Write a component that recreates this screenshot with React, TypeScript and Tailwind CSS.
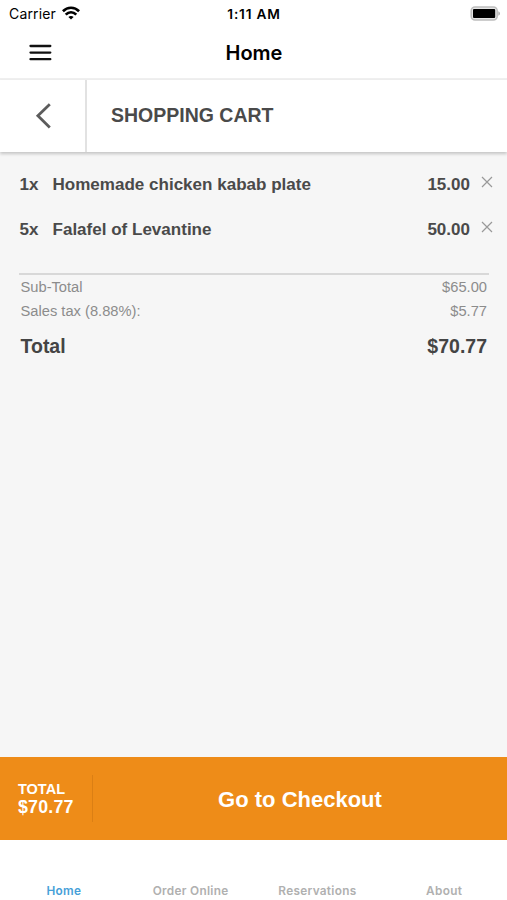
import React from 'react';

const items = [
  { qty: 1, name: 'Homemade chicken kabab plate', price: '15.00' },
  { qty: 5, name: 'Falafel of Levantine', price: '50.00' },
];

const tabs = ['Home', 'Order Online', 'Reservations', 'About'];

const StatusBar = () => (
  <div className="grid grid-cols-3 items-center h-7 pl-[9px] pr-[7px] text-black">
    <div className="flex items-center gap-1.5">
      <span className="text-[14px] leading-7 tracking-[0.15px]">Carrier</span>
      <svg className="mb-[2px]" width="18" height="14" viewBox="0 0 18 14" fill="none" stroke="currentColor" strokeWidth="2.7">
        <path d="M0.9 5.2 C5.5 0.6 12.5 0.6 17.1 5.2" />
        <path d="M3.7 8.6 C6.8 5.6 11.2 5.6 14.3 8.6" />
        <path d="M9 13.4 L6.4 10.9 C7.9 9.6 10.1 9.6 11.6 10.9 Z" fill="currentColor" stroke="none" />
      </svg>
    </div>
    <span className="text-center text-[13.7px] leading-7 font-semibold tracking-[0.8px] pr-px">1:11 AM</span>
    <svg className="justify-self-end mb-px" width="30" height="15" viewBox="0 0 30 15">
      <rect x="1.2" y="1" width="26" height="13" rx="3.8" fill="#e6e6e6" stroke="#bdbdbd" strokeWidth="1.5" />
      <rect x="3" y="3" width="22.2" height="9" rx="1" fill="#000" />
      <path d="M28.4 5.2 C30.4 6.2 30.4 8.8 28.4 9.8 Z" fill="#a6a6a6" />
    </svg>
  </div>
);

const NavBar = () => (
  <div className="grid grid-cols-3 items-center h-[52px] border-b-2 border-[#efefef] pl-[29px] pr-[29px]">
    <svg className="mb-[2px]" width="23" height="17" viewBox="0 0 23 17" stroke="#111" strokeWidth="2.3" strokeLinecap="round">
      <path d="M1.5 2 H21.3 M1.5 8.6 H21.3 M1.5 15.2 H21.3" />
    </svg>
    <h1 className="pl-px text-center text-[20px] leading-6 font-semibold text-black">Home</h1>
  </div>
);

const CartHeader = () => (
  <div className="relative flex h-[72px] bg-white shadow-[0_2px_3px_rgba(0,0,0,0.2)]">
    <button className="flex items-center justify-center w-[87px] pl-px border-r-2 border-[#e2e2e2]">
      <svg width="16" height="26" viewBox="0 0 16 26" fill="none" stroke="#5c5c5c" strokeWidth="2.8">
        <path d="M14.8 1.2 L2.9 12.8 L14.8 24.4" />
      </svg>
    </button>
    <h2 className="pl-6 text-[19.5px] leading-[71px] font-bold text-[#4a4a4a]">SHOPPING CART</h2>
  </div>
);

export default function App() {
  return (
    <div className="flex flex-col w-[507px] h-[900px] overflow-hidden bg-white font-['Inter',sans-serif]">
      <StatusBar />
      <NavBar />

      <div className="flex flex-col flex-1 bg-[#f6f6f6] font-['Liberation_Sans',Arial,sans-serif]">
        <CartHeader />

        {/* Line items */}
        <div className="pt-[10px] pl-[19.5px] pr-[14px] text-[17.05px] font-bold text-[#4a4a4a]">
          {items.map((item) => (
            <div key={item.name} className="flex h-[45px] leading-[45px]">
              <span className="w-[33px]">{item.qty}x</span>
              <span className="flex-1">{item.name}</span>
              <span>{item.price}</span>
              <svg className="ml-[11px] mt-[14px]" width="12" height="12" viewBox="0 0 12 12" stroke="#999" strokeWidth="1.2">
                <path d="M1 1 L11 11 M11 1 L1 11" />
              </svg>
            </div>
          ))}
        </div>

        {/* Summary */}
        <div className="ml-[19px] mr-[18px] mt-[21px] border-t-2 border-[#d8d8d8] pl-[1.5px] pr-[2px] text-[14.7px] text-[#8c8c8c]">
          <div className="flex justify-between leading-6">
            <span>Sub-Total</span>
            <span>$65.00</span>
          </div>
          <div className="flex justify-between leading-6">
            <span>Sales tax (8.88%):</span>
            <span>$5.77</span>
          </div>
          <div className="flex justify-between mt-2 text-[19.5px] leading-[30px] font-bold text-[#444]">
            <span>Total</span>
            <span>$70.77</span>
          </div>
        </div>
      </div>

      {/* Checkout bar */}
      <div className="flex items-center h-[83px] bg-[#ee8c18] font-['Liberation_Sans',Arial,sans-serif] font-bold text-white">
        <div className="flex flex-col justify-center w-[93px] h-[47px] pl-[18px] border-r border-[#db7f14]">
          <span className="text-[14.5px] leading-[18px]">TOTAL</span>
          <span className="text-[17.8px] leading-[19px] tracking-[0.2px]">$70.77</span>
        </div>
        <button className="flex-1 pt-[2px] text-center text-[22px] leading-7">Go to Checkout</button>
      </div>

      <div className="grid grid-cols-4 h-[60px] bg-white">
        {tabs.map((tab, i) => (
          <span
            key={tab}
            className={`pt-[42px] pl-px text-center text-[11.8px] leading-[18px] font-semibold tracking-[0.3px] ${i === 0 ? 'text-[#479fd8]' : 'text-[#b0b0b0]'}`}
          >
            {tab}
          </span>
        ))}
      </div>
    </div>
  );
}
